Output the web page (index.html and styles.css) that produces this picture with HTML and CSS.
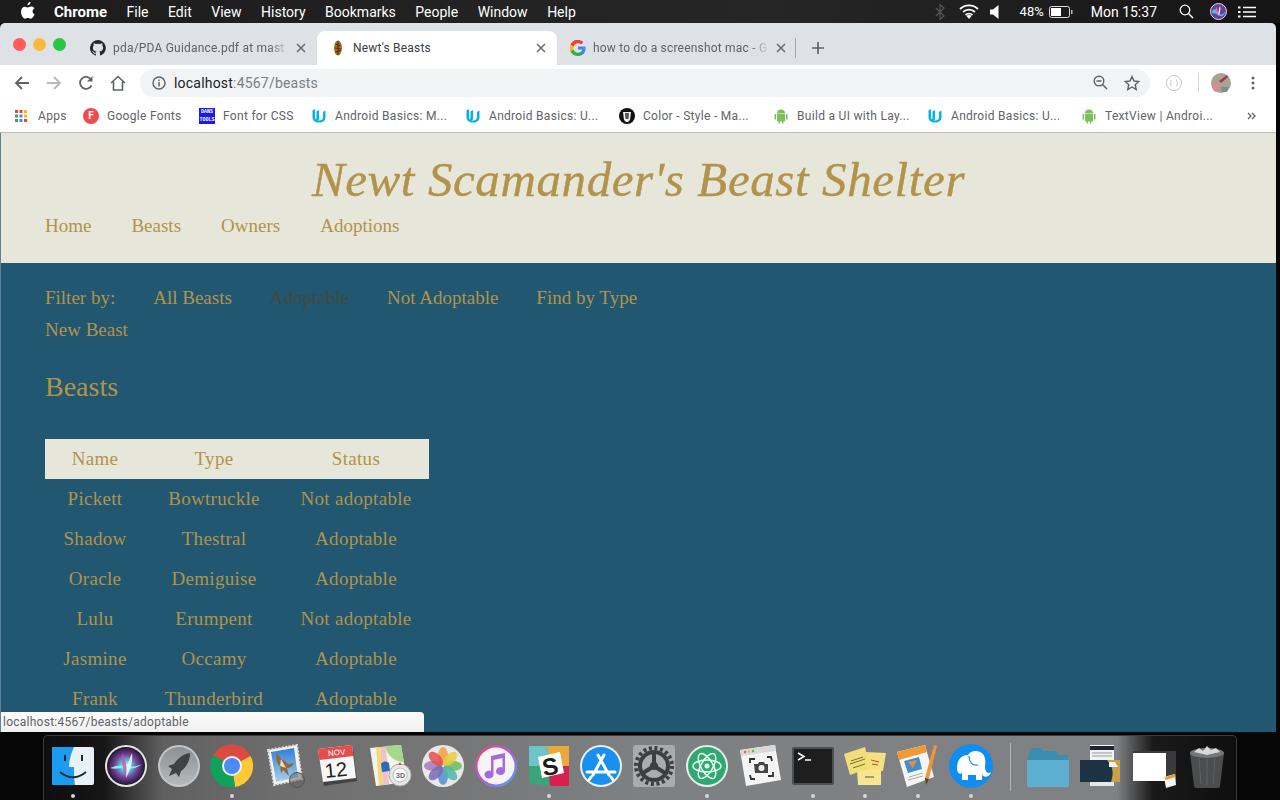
FILE: index.html
```html
<!DOCTYPE html>
<html lang="en">
<head>
  <meta charset="UTF-8">
  <link rel="stylesheet" href="styles.css">
  <title>Newt's Beasts</title>
</head>
<body>
  <svg class="defs" width="0" height="0">
    <symbol id="udacity" viewBox="0 0 16 16"><path d="M1.500 2.500v7c0 3 3 5 6.500 5s6.500-2 6.500-5v-7l-2.500 1.500v5.500c0 2-1.800 3-4 3-.5 0-1 0-1.500-.2 1 0 1.500-1 1.500-2.300V2l-2.500 1.500v5.800c0 1-.4 1.800-1 2.200-.4-.5-.5-1.200-.5-2V1z" fill="#02b3e4"/></symbol>
    <symbol id="android" viewBox="0 0 16 16"><path d="M4 5.500a4 4 0 0 1 8 0zM4 6h8v6.500a1 1 0 0 1-1 1h-.6v2h-1.400v-2H7v2H5.600v-2H5a1 1 0 0 1-1-1zM1.500 6h1.500v5.500H1.500zM13 6h1.500v5.500H13z" fill="#78c257"/></symbol>
    <symbol id="close" viewBox="0 0 10 10"><path d="M1 1l8 8M9 1l-8 8" stroke="#5f6368" stroke-width="1.400" fill="none"/></symbol>
  </svg>

  <header class="menubar">
    <svg class="apple" width="14" height="17" viewBox="0 0 14 17"><path d="M9.500 0c.1 1.500-1.200 3.300-3 3.200C6.300 1.700 7.800.2 9.500 0zM13.600 12.300c-.9 2.200-2.300 4.400-3.800 4.400-1.200 0-1.600-.7-2.900-.7s-1.800.7-2.900.7C2 16.700 0 13 0 9.800 0 6.600 2 4.700 4 4.700c1.200 0 2.200.8 2.900.8s1.900-.9 3.300-.9c.6 0 2.300.2 3.300 1.700-2.800 1.700-2.300 5 .1 6z" fill="#fff"/></svg>
    <nav class="menus">
      <b>Chrome</b><span>File</span><span>Edit</span><span>View</span><span>History</span><span>Bookmarks</span><span>People</span><span>Window</span><span>Help</span>
    </nav>
    <div class="status-icons">
      <svg class="st-bt" width="10" height="16" viewBox="0 0 10 16"><path d="M1 4l8 8-4 3.500V.5l4 3.500-8 8" fill="none" stroke="#555" stroke-width="1.200"/></svg>
      <svg class="st-wifi" width="20" height="15" viewBox="0 0 20 15"><path d="M1 5a13 13 0 0 1 18 0M4 8a9 9 0 0 1 12 0M6.500 11a5 5 0 0 1 7 0" fill="none" stroke="#fff" stroke-width="1.800"/><path d="M10 15l-2.500-3a3.500 3.500 0 0 1 5 0z" fill="#fff"/></svg>
      <svg class="st-vol" width="9" height="14" viewBox="0 0 9 14"><path d="M0 4.500h3L8.500 0v14L3 9.500H0z" fill="#fff"/></svg>
      <span class="st-pct">48%</span>
      <svg class="st-batt" width="24" height="12" viewBox="0 0 24 12"><rect x=".5" y=".5" width="20" height="11" rx="2" fill="none" stroke="#ddd"/><rect x="2" y="2" width="10" height="8" fill="#fff"/><rect x="22" y="4" width="1.500" height="4" fill="#bbb"/></svg>
      <span class="st-clock">Mon 15:37</span>
      <svg class="st-search" width="15" height="15" viewBox="0 0 15 15"><circle cx="6" cy="6" r="4.800" fill="none" stroke="#fff" stroke-width="1.300"/><path d="M9.500 9.500L14 14" stroke="#fff" stroke-width="1.500"/></svg>
      <svg class="st-siri" width="17" height="17" viewBox="0 0 17 17"><circle cx="8.500" cy="8.500" r="8" fill="#6a3f9c" stroke="#ddd"/><path d="M1.500 9c3-4 4-4 7 0s4 3 7-1c-2 6-4 6-7 4S3 11 1.500 9z" fill="#4fb6e8"/><path d="M6 4c2 2 3 6 2.500 9C7 11 5.500 7 6 4z" fill="#f35aa5"/><path d="M10 3c1 3 0 7-1.500 10 0-3 0-7 1.500-10z" fill="#fff"/></svg>
      <svg class="st-list" width="18" height="12" viewBox="0 0 18 12"><path d="M5 1.500h13M5 6h13M5 10.500h13" stroke="#fff" stroke-width="1.600"/><path d="M0 .5h2.500v2H0zM0 5h2.500v2H0zM0 9.500h2.500v2H0z" fill="#fff"/></svg>
    </div>
  </header>

  <div class="window">
    <div class="tabstrip">
      <div class="lights"><i class="red"></i><i class="amber"></i><i class="green"></i></div>
      <div class="tab">
        <svg class="fav" width="16" height="16" viewBox="0 0 16 16"><path d="M8 0a8 8 0 0 0-2.500 15.600c.4.1.5-.2.5-.4v-1.400c-2.200.5-2.700-1-2.700-1-.4-.9-.9-1.200-.9-1.200-.7-.5.1-.5.1-.5.8.1 1.200.8 1.200.8.7 1.200 1.900.9 2.300.7.1-.5.300-.9.500-1.100-1.800-.2-3.600-.9-3.600-4 0-.9.300-1.600.8-2.100-.1-.2-.4-1 .1-2.100 0 0 .7-.2 2.200.8a7.600 7.600 0 0 1 4 0c1.500-1 2.200-.8 2.200-.8.4 1.100.2 1.900.1 2.100.5.600.8 1.300.8 2.100 0 3.100-1.900 3.700-3.700 3.900.3.3.6.800.6 1.500v2.200c0 .2.100.5.600.4A8 8 0 0 0 8 0z" fill="#24292e"/></svg>
        <span class="tab-title">pda/PDA Guidance.pdf at mast</span>
        <svg class="tab-x" width="10" height="10"><use href="#close"/></svg>
      </div>
      <div class="tab tab-active">
        <svg class="fav" width="16" height="16" viewBox="0 0 16 16"><ellipse cx="8" cy="8" rx="4" ry="7.500" fill="#a9701f"/><path d="M5.500 4l5 2M5 8l6 1M5.500 12l5-1.500M8 1v14" stroke="#4c2f0c" stroke-width="1.100"/></svg>
        <span class="tab-title">Newt's Beasts</span>
        <svg class="tab-x" width="10" height="10"><use href="#close"/></svg>
      </div>
      <div class="tab">
        <svg class="fav" width="16" height="16" viewBox="0 0 16 16"><path d="M15.600 8.200c0-.6 0-1.100-.1-1.600H8v3h4.300a3.700 3.700 0 0 1-1.600 2.400v2h2.600c1.500-1.400 2.300-3.400 2.300-5.800z" fill="#4285f4"/><path d="M8 16c2.200 0 4-.7 5.300-2l-2.600-2c-.7.500-1.600.8-2.700.8-2.100 0-3.900-1.400-4.500-3.300H.5v2.100A8 8 0 0 0 8 16z" fill="#34a853"/><path d="M3.500 9.500a4.800 4.800 0 0 1 0-3V4.400H.5a8 8 0 0 0 0 7.200z" fill="#fbbc05"/><path d="M8 3.200c1.200 0 2.300.4 3.100 1.200l2.300-2.300A8 8 0 0 0 .5 4.400l3 2.100C4.100 4.600 5.900 3.200 8 3.200z" fill="#ea4335"/></svg>
        <span class="tab-title">how to do a screenshot mac - G</span>
        <svg class="tab-x" width="10" height="10"><use href="#close"/></svg>
      </div>
      <div class="tab-sep"></div>
      <svg class="tab-new" width="12" height="12" viewBox="0 0 12 12"><path d="M6 0v12M0 6h12" stroke="#5f6368" stroke-width="1.700"/></svg>
    </div>

    <div class="toolbar">
      <svg class="tb-btn" width="16" height="16" viewBox="0 0 16 16"><path d="M15 8H2M8 2L2 8l6 6" fill="none" stroke="#5f6368" stroke-width="1.800"/></svg>
      <svg class="tb-btn" width="16" height="16" viewBox="0 0 16 16"><path d="M1 8h13M8 2l6 6-6 6" fill="none" stroke="#b6b9bd" stroke-width="1.800"/></svg>
      <svg class="tb-btn" width="16" height="16" viewBox="0 0 16 16"><path d="M13.500 10.500A6 6 0 1 1 13 4.500" fill="none" stroke="#5f6368" stroke-width="1.800"/><path d="M14.500 1v5.500H9z" fill="#5f6368"/></svg>
      <svg class="tb-btn" width="16" height="16" viewBox="0 0 16 16"><path d="M1 8l7-6.500L15 8M3.500 6.500V15h9V6.500" fill="none" stroke="#5f6368" stroke-width="1.600"/></svg>
      <div class="omnibox">
        <svg class="omni-info" width="14" height="14" viewBox="0 0 14 14"><circle cx="7" cy="7" r="6" fill="none" stroke="#5f6368" stroke-width="1.400"/><path d="M7 6v4.500M7 3.500v1.500" stroke="#5f6368" stroke-width="1.500"/></svg>
        <span class="url">localhost<span class="url-path">:4567/beasts</span></span>
        <svg class="omni-zoom" width="15" height="15" viewBox="0 0 15 15"><circle cx="6" cy="6" r="4.800" fill="none" stroke="#5f6368" stroke-width="1.400"/><path d="M9.500 9.500L14 14M3.500 6h5" stroke="#5f6368" stroke-width="1.500"/></svg>
        <svg class="omni-star" width="16" height="16" viewBox="0 0 16 16"><path d="M8 1.500l2 4.500 4.800.5-3.600 3.200 1 4.800L8 12l-4.200 2.500 1-4.800L1.200 6.500 6 6z" fill="none" stroke="#5f6368" stroke-width="1.400"/></svg>
      </div>
      <svg class="tb-ext" width="16" height="16" viewBox="0 0 16 16"><circle cx="8" cy="8" r="7.500" fill="none" stroke="#c4c6c9"/><path d="M6 5c-1 0-1 1-1 2s-1 1-1 1 1 0 1 1 0 2 1 2M10 5c1 0 1 1 1 2s1 1 1 1-1 0-1 1 0 2-1 2" fill="none" stroke="#c4c6c9"/></svg>
      <div class="tb-sep"></div>
      <svg class="tb-avatar" width="20" height="20" viewBox="0 0 20 20"><circle cx="10" cy="10" r="10" fill="#a9a394"/><path d="M1 12c2-5 6-3 7 0s-1 7-3 7-4-3-4-7z" fill="#d98c95"/><path d="M8 8l8-6 1 2-7 6z" fill="#a8344a"/><path d="M10 14h8l-2 5h-5z" fill="#7d8c96"/></svg>
      <svg class="tb-menu" width="4" height="14" viewBox="0 0 4 14"><circle cx="2" cy="2" r="1.500" fill="#5f6368"/><circle cx="2" cy="7" r="1.500" fill="#5f6368"/><circle cx="2" cy="12" r="1.500" fill="#5f6368"/></svg>
    </div>

    <div class="bookmarks">
      <a class="bm">
        <svg width="14" height="14" viewBox="0 0 14 14"><path d="M1 1h3v3H1z" fill="#ea4335"/><path d="M5.500 1h3v3h-3z" fill="#ea4335"/><path d="M10 1h3v3h-3z" fill="#fbbc05"/><path d="M1 5.500h3v3H1z" fill="#34a853"/><path d="M5.500 5.500h3v3h-3z" fill="#4285f4"/><path d="M10 5.500h3v3h-3z" fill="#fbbc05"/><path d="M1 10h3v3H1z" fill="#34a853"/><path d="M5.500 10h3v3h-3z" fill="#4285f4"/><path d="M10 10h3v3h-3z" fill="#ea4335"/></svg>
        <span class="bm-apps">Apps</span>
      </a>
      <a class="bm">
        <span class="bm-f">F</span>
        <span class="bm-t bm-fonts">Google Fonts</span>
      </a>
      <a class="bm">
        <span class="bm-dans">DANS<br>TOOLS</span>
        <span class="bm-t bm-css">Font for CSS</span>
      </a>
      <a class="bm">
        <svg width="16" height="16"><use href="#udacity"/></svg>
        <span class="bm-t bm-long">Android Basics: M...</span>
      </a>
      <a class="bm">
        <svg width="16" height="16"><use href="#udacity"/></svg>
        <span class="bm-t bm-long">Android Basics: U...</span>
      </a>
      <a class="bm">
        <svg width="16" height="16" viewBox="0 0 16 16"><circle cx="8" cy="8" r="8" fill="#111"/><path d="M4 4l8 0-1 8-2 2H7l-2-2z" fill="#eee"/><path d="M6 5h4l-.5 6H6.500z" fill="#555"/></svg>
        <span class="bm-t bm-long">Color - Style - Ma...</span>
      </a>
      <a class="bm">
        <svg width="16" height="16"><use href="#android"/></svg>
        <span class="bm-t bm-long">Build a UI with Lay...</span>
      </a>
      <a class="bm">
        <svg width="16" height="16"><use href="#udacity"/></svg>
        <span class="bm-t bm-long">Android Basics: U...</span>
      </a>
      <a class="bm">
        <svg width="16" height="16"><use href="#android"/></svg>
        <span class="bm-t bm-text">TextView | Androi...</span>
      </a>
      <svg class="bm-more" width="9" height="8" viewBox="0 0 9 8"><path d="M1 1l3 3-3 3M5 1l3 3-3 3" fill="none" stroke="#5f6368" stroke-width="1.300"/></svg>
    </div>

    <main class="page">
      <div class="site-head">
        <h1 class="site-title">Newt Scamander's Beast Shelter</h1>
        <nav class="site-nav">
          <a>Home</a><a>Beasts</a><a>Owners</a><a>Adoptions</a>
        </nav>
      </div>
      <div class="content">
        <nav class="filters">
          <span>Filter by:</span><a>All Beasts</a><a class="hover">Adoptable</a><a>Not Adoptable</a><a>Find by Type</a><a>New Beast</a>
        </nav>
        <h2 class="heading">Beasts</h2>
        <table class="beasts">
          <thead>
            <tr><th class="col-name">Name</th><th class="col-type">Type</th><th class="col-status">Status</th></tr>
          </thead>
          <tbody>
            <tr><td>Pickett</td><td>Bowtruckle</td><td>Not adoptable</td></tr>
            <tr><td>Shadow</td><td>Thestral</td><td>Adoptable</td></tr>
            <tr><td>Oracle</td><td>Demiguise</td><td>Adoptable</td></tr>
            <tr><td>Lulu</td><td>Erumpent</td><td>Not adoptable</td></tr>
            <tr><td>Jasmine</td><td>Occamy</td><td>Adoptable</td></tr>
            <tr><td>Frank</td><td>Thunderbird</td><td>Adoptable</td></tr>
          </tbody>
        </table>
      </div>
      <div class="status-bubble">localhost:4567/beasts/adoptable</div>
    </main>
  </div>

  <footer class="dock">
    <div class="dock-item on">
      <svg viewBox="0 0 44 44"><rect x="1" y="3" width="42" height="38" rx="2" fill="#e9f1f8"/><path d="M3 3h20c-3 7-5 13-5 20h5c0 6 0 12 1 18H3a2 2 0 0 1-2-2V5a2 2 0 0 1 2-2z" fill="#1c9cf0"/><path d="M14 11v6M31 11v6" stroke="#1a2b3c" stroke-width="2"/><path d="M9 28c8 7 18 7 26 0" fill="none" stroke="#1a2b3c" stroke-width="1.800"/></svg>
    </div>
    <div class="dock-item">
      <svg viewBox="0 0 44 44"><defs><radialGradient id="siri"><stop offset="0" stop-color="#e8ffff"/><stop offset=".3" stop-color="#45c8d8"/><stop offset=".6" stop-color="#7a3f9a"/><stop offset="1" stop-color="#1b1730"/></radialGradient></defs><circle cx="22" cy="22" r="21" fill="#e4e4e4"/><circle cx="22" cy="22" r="19" fill="url(#siri)"/><path d="M6 24c7-3 11-3 16-2s10 1 16-2c-6 5-11 5-16 4s-10 2-16 0z" fill="#8df0e6"/><path d="M18 9c3 5 5 9 4 25-3-8-5-17-4-25z" fill="#d44ea8" fill-opacity=".8"/><path d="M28 9c1 8-1 16-6 25 0-8 2-17 6-25z" fill="#fff" fill-opacity=".8"/></svg>
    </div>
    <div class="dock-item">
      <svg viewBox="0 0 44 44"><defs><linearGradient id="pad" x1="0" y1="0" x2="0" y2="1"><stop offset="0" stop-color="#8d9193"/><stop offset="1" stop-color="#b5b9bb"/></linearGradient></defs><circle cx="22" cy="22" r="21" fill="#c4c7c9"/><circle cx="22" cy="22" r="19" fill="url(#pad)"/><path d="M33 9c-7 1-12 5-16 11l-6 2 4 3-3 7 7-3 3 4 2-6c6-4 9-11 9-18z" fill="#3f4143"/></svg>
    </div>
    <div class="dock-item on">
      <svg viewBox="0 0 44 44"><path d="M22 22L3.500 11A21 21 0 0 1 40.500 12z" fill="#dd4b3e"/><path d="M22 22L40.500 12A21 21 0 0 1 25 43z" fill="#fcc934"/><path d="M22 22L25 43A21 21 0 0 1 3.500 11z" fill="#12a15a"/><circle cx="22" cy="22" r="10" fill="#f1f1f1"/><circle cx="22" cy="22" r="8" fill="#4b8bf5"/></svg>
    </div>
    <div class="dock-item">
      <svg viewBox="0 0 44 44"><defs><linearGradient id="sky" x1="0" y1="0" x2="0" y2="1"><stop offset="0" stop-color="#2f7fd8"/><stop offset="1" stop-color="#a8d0ee"/></linearGradient></defs><path d="M5 6l29-5 5 34-28 6z" fill="#f6f6f2" stroke="#ddd" stroke-width="2" stroke-dasharray="2 1.500"/><path d="M8 8l23-4 4 29-22 5z" fill="url(#sky)"/><path d="M13 10c2 0 4 2 5 5 3 1 6 3 7 5l6-1c-1 3-4 5-7 5l2 8-6-6-2 3-1-7c-3-2-4-6-4-12z" fill="#8f6a3e"/><path d="M18 15l5 9-6-2z" fill="#e8dcc4"/><circle cx="34" cy="36" r="7.500" fill="#666" fill-opacity=".55" stroke="#555"/></svg>
    </div>
    <div class="dock-item">
      <svg viewBox="0 0 44 44"><path d="M4 8l34-4 4 33-33 5z" fill="#444"/><path d="M3 5l34-4 4 33-33 4z" fill="#f7f7f7"/><path d="M3 5l34-4 1.500 11-34 4z" fill="#e64c4c"/><text class="cal-mon" x="13" y="11.500" transform="rotate(-6 20 9)">NOV</text><text class="cal-day" x="10" y="33" transform="rotate(-6 20 28)">12</text></svg>
    </div>
    <div class="dock-item">
      <svg viewBox="0 0 44 44"><path d="M2 4l31-3 6 37-31 4z" fill="#f6f3ea"/><path d="M17 2l16-1 3 17c-10 0-17-7-19-16z" fill="#a5d98a"/><path d="M12 3l6 0 3 37-6 1z" fill="#f0c2c2"/><path d="M8 3l4 0 3 38-4 0z" fill="#f4d87a"/><path d="M13 20a5 5 0 0 1 8-1l1 8-8 1z" fill="#2a6cb8"/><circle cx="32" cy="31" r="11" fill="#e5e7e8" stroke="#aaa"/><circle cx="32" cy="31" r="7" fill="#fff" stroke="#bbb"/><path d="M32 18l-1.500 3h3z" fill="#e33"/><text class="map-3d" x="28" y="34">3D</text></svg>
    </div>
    <div class="dock-item">
      <svg viewBox="0 0 44 44"><circle cx="22" cy="22" r="21" fill="#e8e8e8"/><g fill-opacity=".85"><ellipse cx="22" cy="12" rx="5" ry="9" fill="#f29d38"/><ellipse cx="22" cy="32" rx="5" ry="9" fill="#4f8fd0"/><ellipse cx="12" cy="22" rx="9" ry="5" fill="#a878b8"/><ellipse cx="32" cy="22" rx="9" ry="5" fill="#6dbb5a"/><ellipse cx="15" cy="15" rx="5" ry="9" transform="rotate(-45 15 15)" fill="#e34f4f"/><ellipse cx="29" cy="15" rx="5" ry="9" transform="rotate(45 29 15)" fill="#e8cd3f"/><ellipse cx="15" cy="29" rx="5" ry="9" transform="rotate(45 15 29)" fill="#7a68b8"/><ellipse cx="29" cy="29" rx="5" ry="9" transform="rotate(-45 29 29)" fill="#4fb7a8"/></g></svg>
    </div>
    <div class="dock-item">
      <svg viewBox="0 0 44 44"><defs><linearGradient id="tunes" x1="0" y1="0" x2="1" y2="1"><stop offset="0" stop-color="#f0485f"/><stop offset=".5" stop-color="#b45ae0"/><stop offset="1" stop-color="#35b4f0"/></linearGradient></defs><circle cx="22" cy="22" r="21" fill="url(#tunes)"/><circle cx="22" cy="22" r="18.500" fill="#f8f4f6"/><path d="M17 12l14-3v18a4.500 4 0 1 1-2.500-3.500V14l-9 2v14.500a4.500 4 0 1 1-2.500-3.500z" fill="#a46ae0"/></svg>
    </div>
    <div class="dock-item on">
      <svg viewBox="0 0 44 44"><path d="M2 2h18l3 20H2z" fill="#6bc5c9"/><path d="M20 2h22v20H23z" fill="#e9a93c"/><path d="M2 22h19l2 20-21-3z" fill="#3aa57c"/><path d="M21 22h21v20H23z" fill="#d81f4e"/><path d="M11 13l22-5 4 21-22 5z" fill="#fff"/><text class="slack-s" x="15" y="31" transform="rotate(-10 23 22)">S</text></svg>
    </div>
    <div class="dock-item">
      <svg viewBox="0 0 44 44"><circle cx="22" cy="22" r="21" fill="#e8f2fb"/><circle cx="22" cy="22" r="19" fill="#1a90ee"/><path d="M14 31L25 11M30 31L19 11M8 28h28M12 33l-2 3M32 33l2 3" stroke="#fff" stroke-width="3" fill="none" stroke-linecap="round"/></svg>
    </div>
    <div class="dock-item">
      <svg viewBox="0 0 44 44"><rect x="1" y="1" width="42" height="42" rx="3" fill="#a8acaf"/><circle cx="22" cy="22" r="18" fill="none" stroke="#3e3e40" stroke-width="4" stroke-dasharray="3 2.650"/><circle cx="22" cy="22" r="16" fill="#3e3e40"/><circle cx="22" cy="22" r="12" fill="#a9abad"/><path d="M22 22V9M22 22l-11 7M22 22l11 7" stroke="#3e3e40" stroke-width="4"/><circle cx="22" cy="22" r="4" fill="#3e3e40"/></svg>
    </div>
    <div class="dock-item on">
      <svg viewBox="0 0 44 44"><circle cx="22" cy="22" r="21" fill="#e4f0e8"/><circle cx="22" cy="22" r="19" fill="#2fa872"/><g fill="none" stroke="#e8fff0" stroke-width="1.500"><ellipse cx="22" cy="22" rx="14" ry="6"/><ellipse cx="22" cy="22" rx="14" ry="6" transform="rotate(60 22 22)"/><ellipse cx="22" cy="22" rx="14" ry="6" transform="rotate(120 22 22)"/></g><circle cx="22" cy="22" r="2.500" fill="#e8fff0"/></svg>
    </div>
    <div class="dock-item">
      <svg viewBox="0 0 44 44"><path d="M2 6l35-5 6 35-35 6z" fill="#f4f4f4"/><path d="M2 6l35-5 1 6-35 5z" fill="#d9d9d9"/><circle cx="7" cy="8" r="1.200" fill="#e55"/><circle cx="11" cy="7.500" r="1.200" fill="#eb4"/><circle cx="15" cy="7" r="1.200" fill="#5b5"/><path d="M12 19v-4h5M29 13h4l1 4M35 28v4h-5M17 35h-4l-1-4" fill="none" stroke="#333" stroke-width="1.800"/><path d="M16 20h4l1-2h5l1 2h3v9H17z" fill="#444"/><circle cx="23.500" cy="24" r="3" fill="#eee"/></svg>
    </div>
    <div class="dock-item on">
      <svg viewBox="0 0 44 44"><rect x="1" y="3" width="42" height="38" rx="2" fill="#4f4f4f"/><rect x="3" y="5" width="38" height="34" fill="#1e1e1e"/><path d="M7 9l6 3.500-6 3.500" fill="none" stroke="#fff" stroke-width="1.500"/><path d="M14 16h6" stroke="#fff" stroke-width="1.500"/></svg>
    </div>
    <div class="dock-item on">
      <svg viewBox="0 0 44 44"><path d="M22 8l21 1-3 18-18-1z" fill="#f5e27e"/><path d="M14 26h24v15H15z" fill="#f5e68f"/><path d="M1 10L22 3l5 21-20 7z" fill="#f2de78"/><path d="M8 17l12-4M7 20l15-5M10 24l12-4" stroke="#76703c"/><path d="M28 16l8 2M29 20l6 1" stroke="#d23b3b"/><path d="M22 33h9" stroke="#555"/></svg>
    </div>
    <div class="dock-item on">
      <svg viewBox="0 0 44 44"><path d="M1 8l28-7 9 32-27 10z" fill="#f6f6f4"/><path d="M1 8l28-7 2 7-28 8z" fill="#f09a37"/><path d="M8 17l15-4 3 12-14 4z" fill="#3f8fd0"/><path d="M12 18l9-2-4 8z" fill="#f08a37"/><path d="M13 33l14-4M12 36l15-4" stroke="#aaa"/><path d="M38 1l3 1-8 32-3 6-1-6z" fill="#f0963a"/><path d="M29 34l4 1-3 6z" fill="#444"/></svg>
    </div>
    <div class="dock-item on">
      <svg viewBox="0 0 44 44"><circle cx="22" cy="22" r="22" fill="#0f8df0"/><path d="M8 24C8 15 13 11 19 11 21 7 27 6 31 8c5 2 6 8 5 14 0 4 1 7 4 7 1 0 2-1 2-1-1 4-5 6-8 4l-1-2v6h-6v-5h-8v5h-6v-7c-3 2-5-1-5-5z" fill="#fff"/><path d="M20 12c0 6 3 10 9 9" fill="none" stroke="#0f8df0" stroke-width="1.200"/></svg>
    </div>
    <div class="dock-sep"></div>
    <div class="dock-item">
      <svg viewBox="0 0 44 44"><path d="M2 12l3-8h10l2 3h13l2 4h10v28a2 2 0 0 1-2 2H4a2 2 0 0 1-2-2z" fill="#3b8db0"/><path d="M1 16h42v25a2 2 0 0 1-2 2H3a2 2 0 0 1-2-2z" fill="#5eb0d2"/></svg>
    </div>
    <div class="dock-item">
      <svg viewBox="0 0 44 44"><rect x="11" y="1" width="24" height="16" fill="#f2f2f2"/><rect x="11" y="2" width="24" height="4" fill="#223"/><path d="M13 9h20M13 12h20" stroke="#999"/><rect x="1" y="16" width="40" height="22" fill="#1b3345"/><path d="M28 16c4 5 8 10 4 22h9V16z" fill="#c8a04a"/><rect x="11" y="38" width="24" height="4" fill="#e8e8e8"/><path d="M30 18h6l3 5-9 0z" fill="#f5f5f5"/></svg>
    </div>
    <div class="dock-item">
      <svg viewBox="0 0 44 44"><rect x="1" y="7" width="44" height="30" fill="#3a3a3c"/><rect x="1" y="9" width="33" height="28" fill="#fff"/><path d="M32 33l11-3 1 11-10 3z" fill="#f4f4f2"/><path d="M33 33l10-3 .5 3-10 3z" fill="#f09a37"/></svg>
    </div>
    <div class="dock-item">
      <svg viewBox="0 0 44 44"><path d="M5 9h34l-4 33a2 2 0 0 1-2 2H11a2 2 0 0 1-2-2z" fill="#4a4c4e"/><ellipse cx="22" cy="9" rx="17" ry="5" fill="#747678"/><path d="M9 8l5-4 4 3 4-5 4 4 5-2 4 4-13 3z" fill="#d8d8d8"/><path d="M14 14l2 26M22 15v26M30 14l-2 26" stroke="#5e6062"/></svg>
    </div>
  </footer>
</body>
</html>
```

FILE: styles.css
```css
*, *::before, *::after {
  margin: 0;
  padding: 0;
  box-sizing: border-box;
}

html, body {
  height: 800px;
  overflow: hidden;
}

body {
  display: flex;
  flex-direction: column;
  background: #060606;
  font-family: "Roboto", "Liberation Sans", sans-serif;
}

.defs {
  position: absolute;
}

/* mac menu bar */
.menubar {
  height: 23px;
  flex: none;
  display: flex;
  align-items: center;
  padding-left: 21px;
  background: linear-gradient(90deg, #1c1c1c, #262626 60%, #151515);
  color: #fff;
  font-size: 14px;
}

.menubar b {
  font-size: 15px;
}

.apple {
  margin-right: 19px;
  margin-top: -2px;
}

.menus {
  display: flex;
  align-items: center;
  gap: 19.500px;
}

.status-icons {
  margin-left: auto;
  display: flex;
  align-items: center;
}

.st-bt { margin-right: 14px; }
.st-wifi { margin-right: 11px; }
.st-vol { margin-right: 21px; }
.st-pct { margin-right: 5px; font-size: 13px; }
.st-batt { margin-right: 18px; }
.st-clock { margin-right: 22px; }
.st-search { margin-right: 16px; }
.st-siri { margin-right: 11px; }
.st-list { margin-right: 24px; }

/* browser window */
.window {
  height: 709px;
  width: 1276px;
  flex: none;
  position: relative;
  display: flex;
  flex-direction: column;
  overflow: hidden;
  border-radius: 5px 5px 0 0;
}

.tabstrip {
  height: 42px;
  flex: none;
  display: flex;
  align-items: flex-end;
  background: #dee1e6;
}

.lights {
  width: 77px;
  height: 34px;
  display: flex;
  align-items: center;
  gap: 7px;
  padding: 0 0 8px 13px;
  align-self: flex-end;
}

.lights i {
  width: 13px;
  height: 13px;
  border-radius: 50%;
}

.red { background: #fc5b57; }
.amber { background: #fdb83d; }
.green { background: #27c840; }

.tab {
  width: 240px;
  height: 34px;
  display: flex;
  align-items: center;
  padding: 0 11px 0 13px;
  font-size: 12px;
  letter-spacing: .2px;
  color: #5f6368;
}

.tab-active {
  background: #fff;
  border-radius: 8px 8px 0 0;
}

.tab-active .tab-title {
  color: #3c4043;
  -webkit-mask-image: none;
  mask-image: none;
}

.fav {
  flex: none;
  margin-right: 7px;
}

.tab-title {
  flex: 1;
  white-space: nowrap;
  -webkit-mask-image: linear-gradient(90deg, #000 88%, transparent);
  mask-image: linear-gradient(90deg, #000 88%, transparent);
}

.tab-x {
  flex: none;
  margin-left: 6px;
}

.tab-sep {
  width: 1px;
  height: 20px;
  margin: 0 0 7px -2px;
  background: #a6a9ad;
}

.tab-new {
  margin: 0 0 11px 16px;
}

.toolbar {
  height: 35px;
  flex: none;
  display: flex;
  align-items: center;
  background: #fff;
  padding-left: 14px;
}

.tb-btn {
  flex: none;
  margin-right: 16px;
}

.omnibox {
  width: 1010px;
  height: 28px;
  margin-left: -2px;
  display: flex;
  align-items: center;
  border-radius: 14px;
  background: #f1f3f4;
  padding: 0 10px 0 12px;
  font-size: 14px;
  letter-spacing: .2px;
}

.url {
  margin-left: 8px;
  color: #202124;
}

.url-path {
  color: #7b7f83;
}

.omni-zoom {
  margin-left: auto;
  margin-right: 16px;
}

.tb-ext {
  margin-left: 16px;
}

.tb-sep {
  width: 1px;
  height: 19px;
  margin-left: 16px;
  background: #d3d5d8;
}

.tb-avatar {
  margin-left: 12px;
}

.tb-menu {
  margin-left: 20px;
}

.bookmarks {
  height: 33px;
  flex: none;
  display: flex;
  align-items: center;
  padding: 0 0 1px 14px;
  background: #fff;
  border-bottom: 1px solid #b9bbbd;
  font-size: 12px;
  letter-spacing: .3px;
  color: #5f6368;
}

.bm {
  display: flex;
  align-items: center;
  gap: 8px;
  margin-right: 16px;
  white-space: nowrap;
}

.bm-apps { margin-left: 2px; width: 29px; }
.bm-fonts { width: 76px; }
.bm-css { width: 72px; }
.bm-long { width: 114px; }
.bm-text { width: 109px; }

.bm-f {
  width: 16px;
  height: 16px;
  border-radius: 50%;
  background: #f14b4f;
  color: #fff;
  font-size: 10px;
  font-weight: bold;
  line-height: 16px;
  text-align: center;
  letter-spacing: 0;
}

.bm-dans {
  width: 16px;
  height: 16px;
  background: #1a1aee;
  color: #fff;
  font-family: "Liberation Mono", monospace;
  font-size: 5px;
  font-weight: bold;
  line-height: 8px;
  letter-spacing: 0;
  text-align: center;
}

.bm-more {
  margin-left: 17px;
}

/* the beast shelter page */
.page {
  flex: 1;
  position: relative;
  overflow: hidden;
  background: #225771;
  border-left: 1px solid #5f8396;
  font-family: "Liberation Serif", serif;
  font-size: 19px;
  color: #b29349;
}

.site-head {
  height: 130px;
  padding: 17px 44px 0;
  background: #e6e6da;
}

.site-title {
  height: 60px;
  font-size: 49px;
  font-weight: normal;
  font-style: italic;
  line-height: 60px;
  letter-spacing: .6px;
  -webkit-text-stroke: .4px #b29349;
  text-align: center;
}

.site-nav {
  display: flex;
  gap: 40px;
  margin-top: 3px;
  line-height: 26px;
}

.content {
  padding: 22px 44px 0;
}

.filters {
  display: flex;
  flex-wrap: wrap;
  width: 620px;
  column-gap: 38px;
  row-gap: 6px;
  line-height: 26px;
}

.hover {
  color: #3e4b3c;
}

.heading {
  margin-top: 27px;
  font-size: 28px;
  font-weight: normal;
  line-height: 34px;
}

.beasts {
  margin-top: 35px;
  width: 384px;
  table-layout: fixed;
  border-collapse: collapse;
  letter-spacing: .3px;
}

.beasts th, .beasts td {
  height: 40px;
  padding: 0;
  font-weight: normal;
  text-align: center;
}

.beasts th {
  background: #e6e6da;
}

.col-name { width: 100px; }
.col-type { width: 138px; }
.col-status { width: 146px; }

.status-bubble {
  position: absolute;
  left: -1px;
  bottom: 0;
  width: 424px;
  height: 20px;
  padding-left: 3px;
  background: linear-gradient(#fdfdfd, #f0f0f0);
  border-radius: 0 4px 0 0;
  font-family: "Roboto", sans-serif;
  font-size: 12px;
  line-height: 20px;
  letter-spacing: .25px;
  color: #5f6368;
}

/* dock */
.dock {
  width: 1194px;
  height: 65px;
  margin: 3px 0 0 43px;
  flex: none;
  display: flex;
  padding: 0 2px 0 3px;
  border-radius: 5px 5px 0 0;
  border: 1px solid #3a3a3a;
  border-bottom: 0;
  background: linear-gradient(90deg, #0e0e0e 0, #161616 5%, #606060 10%, #6e6e6e 20%, #7f8082 50%, #808184 90%, #1a1a1a 93%, #0e0e0e 100%);
}

.dock-item {
  width: 52.800px;
  flex: none;
  position: relative;
  display: flex;
  justify-content: center;
  padding-top: 8px;
}

.dock-item svg {
  width: 44px;
  height: 44px;
}

.dock-item.on::after {
  content: "";
  position: absolute;
  left: 50%;
  bottom: 2px;
  width: 4px;
  height: 4px;
  margin-left: -2px;
  border-radius: 50%;
  background: #d6d6d6;
}

.dock-sep {
  width: 1px;
  height: 48px;
  flex: none;
  margin: 7px 11px 0 12.600px;
  background: #b3b3b3;
}

.cal-mon {
  font-family: "Liberation Sans", sans-serif;
  font-size: 8px;
  fill: #fff;
}

.cal-day {
  font-family: "Liberation Sans", sans-serif;
  font-size: 20px;
  fill: #222;
}

.map-3d {
  font-family: "Liberation Sans", sans-serif;
  font-size: 7px;
  font-weight: bold;
  fill: #666;
}

.slack-s {
  font-family: "Liberation Sans", sans-serif;
  font-size: 24px;
  font-weight: bold;
  fill: #1c1c1c;
}
```
